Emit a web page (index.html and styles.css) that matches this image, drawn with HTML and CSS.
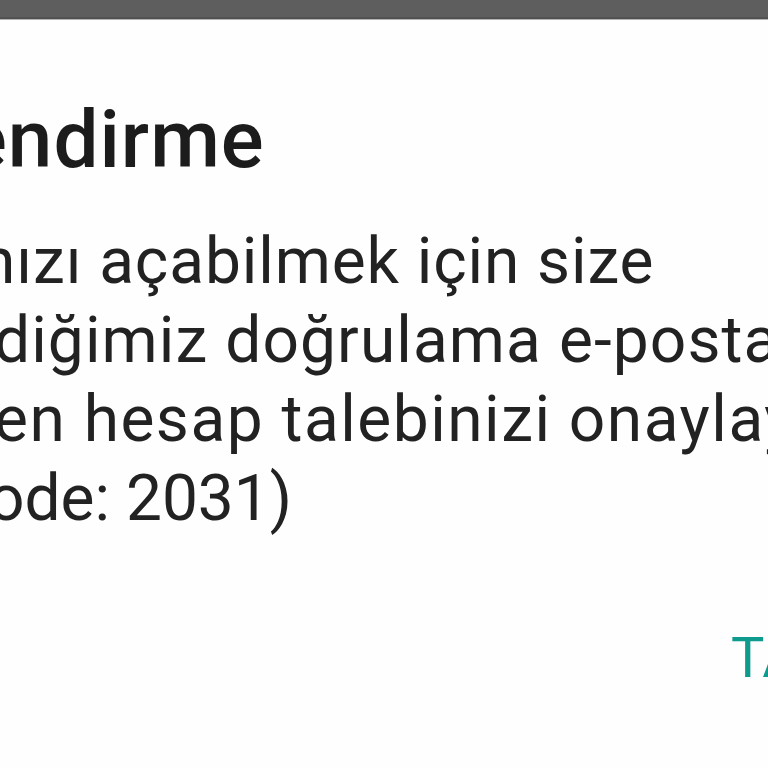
FILE: index.html
```html
<!DOCTYPE html>
<html lang="tr">
<head>
<meta charset="utf-8">
<title>Bilgilendirme</title>
<link rel="stylesheet" href="styles.css">
</head>
<body>
<div class="topbar"></div>
<div class="dialog">
  <h1 class="title">endirme</h1>
  <div class="message">
    <div class="line l1">nızı açabilmek için size</div>
    <div class="line l2">diğimiz doğrulama e-postası</div>
    <div class="line l3">en hesap talebinizi onaylayınız.</div>
    <div class="line l4">ode: 2031)</div>
  </div>
  <div class="actions">
    <span class="btn">TAMAM</span>
  </div>
</div>
</body>
</html>
```
FILE: styles.css
```css
html, body {
  margin: 0;
  padding: 0;
  background: #fefefe;
  overflow: hidden;
  width: 768px;
  height: 768px;
}
body {
  font-family: Roboto, "Liberation Sans", sans-serif;
  color: #1f1f1f;
}
.topbar {
  height: 17px;
  background: #5e5e5e;
  border-bottom: 2px solid #525252;
  box-shadow: 0 1px 0 #b4b4b4;
}
.dialog {
  padding-top: 73px;
  white-space: nowrap;
}
.title {
  margin: 0 0 0 -36px;
  font-size: 80px;
  font-weight: 500;
  line-height: 96px;
  letter-spacing: 1px;
  color: #1c1c1c;
}
.message {
  margin-top: 34px;
  font-size: 64px;
  line-height: 79px;
  color: #222;
}
.line { white-space: nowrap; }
.l1 { margin-left: -20px; letter-spacing: 0.9px; }
.l2 { margin-left: -6px; letter-spacing: 1.1px; }
.l3 { margin-left: -6px; letter-spacing: 1.5px; }
.l4 { margin-left: -12px; }
.actions {
  margin-top: 88px;
  display: flex;
  padding-left: 731px;
}
.btn {
  font-size: 56px;
  line-height: 64px;
  color: #0e9a8d;
  white-space: nowrap;
}
```
